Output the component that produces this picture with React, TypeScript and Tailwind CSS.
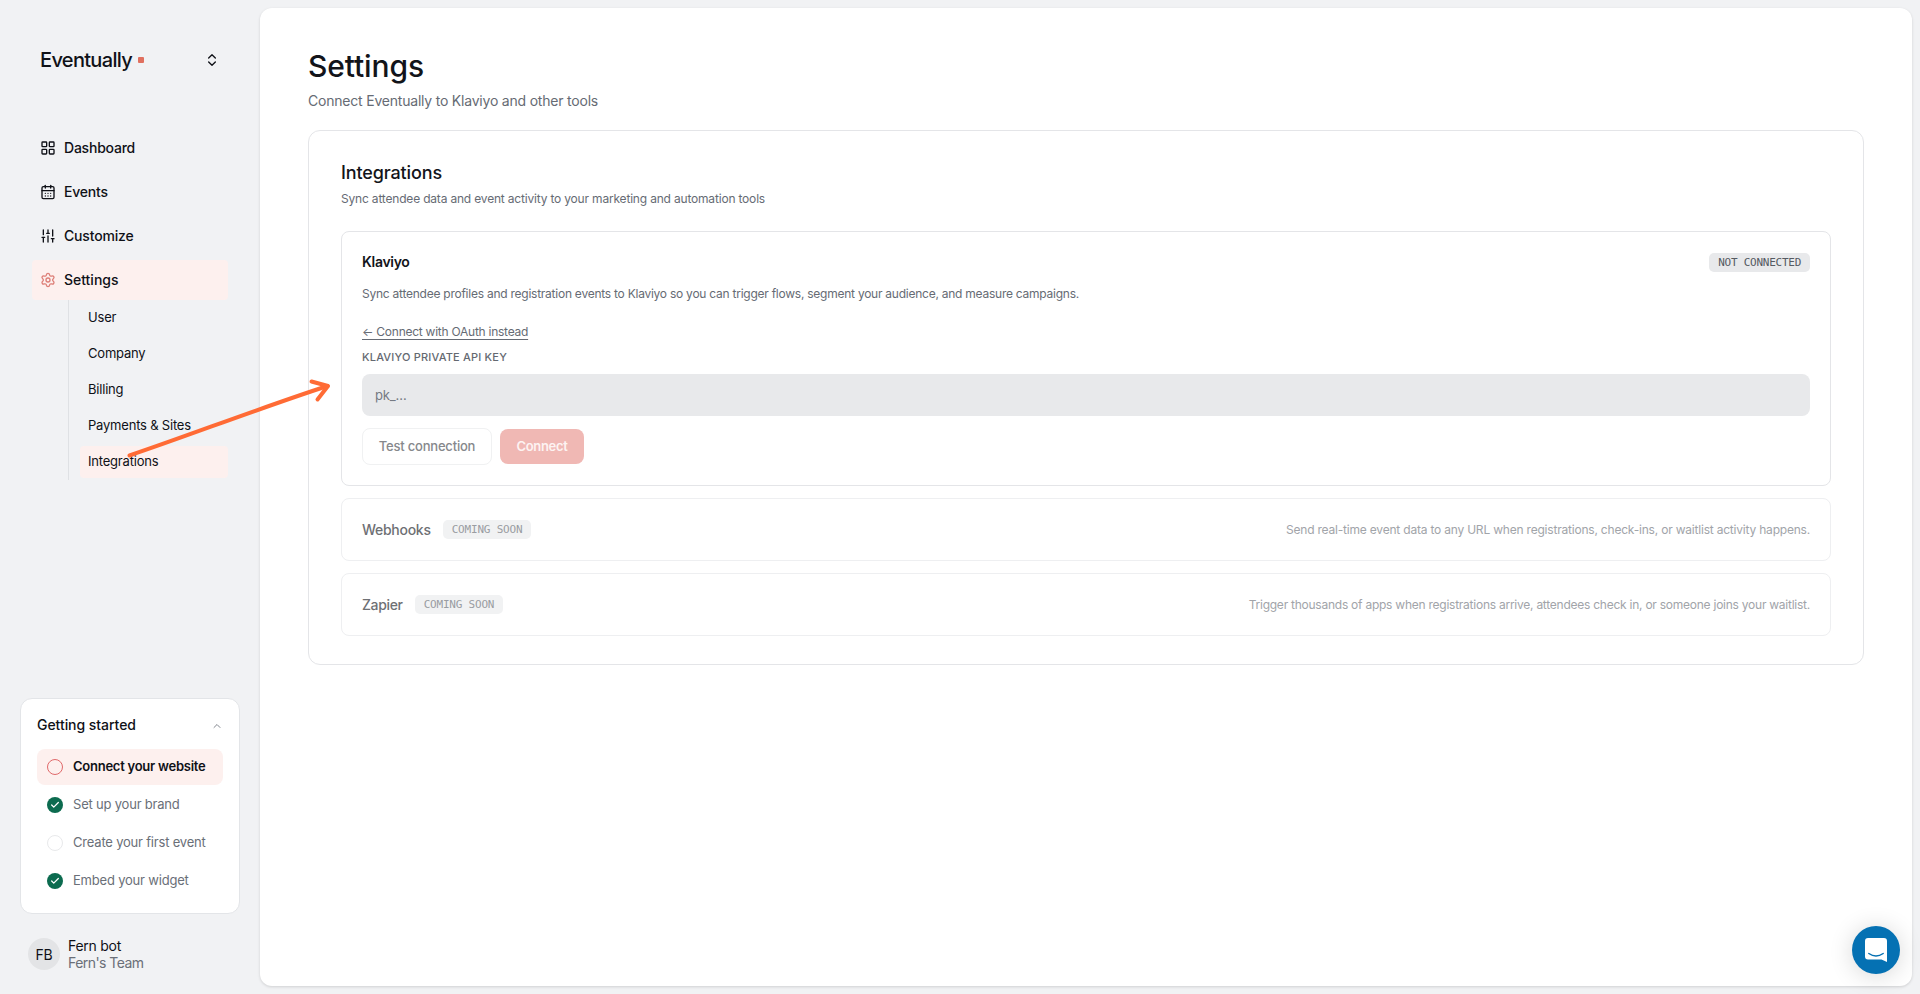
import React from 'react';
import {
  CalendarDays,
  Check,
  ChevronsUpDown,
  ChevronUp,
  LayoutGrid,
  Settings,
  SlidersVertical,
} from 'lucide-react';

const navItems = [
  { id: 'dashboard', label: 'Dashboard', icon: LayoutGrid, tracking: 'tracking-[-0.22px]' },
  { id: 'events', label: 'Events', icon: CalendarDays, tracking: 'tracking-[-0.2px]' },
  { id: 'customize', label: 'Customize', icon: SlidersVertical, tracking: 'tracking-[-0.18px]' },
  { id: 'settings', label: 'Settings', icon: Settings, tracking: 'tracking-[-0.01px]' },
];

const subItems = ['User', 'Company', 'Billing', 'Payments & Sites', 'Integrations'];

const steps = [
  { label: 'Connect your website', state: 'current' },
  { label: 'Set up your brand', state: 'done' },
  { label: 'Create your first event', state: 'todo' },
  { label: 'Embed your widget', state: 'done' },
];

const upcoming = [
  {
    name: 'Webhooks',
    tracking: 'tracking-[-0.28px]',
    description:
      'Send real-time event data to any URL when registrations, check-ins, or waitlist activity happens.',
    descTracking: 'tracking-[-0.202px]',
  },
  {
    name: 'Zapier',
    tracking: 'tracking-[-0.35px]',
    description:
      'Trigger thousands of apps when registrations arrive, attendees check in, or someone joins your waitlist.',
    descTracking: 'tracking-[-0.245px]',
  },
];

const StepIcon: React.FC<{ state: string }> = ({ state }) => {
  if (state === 'done') {
    return (
      <span className="w-4 h-4 rounded-full bg-[#0c6b4f] text-white flex items-center justify-center">
        <Check size={10} strokeWidth={3} />
      </span>
    );
  }
  return (
    <span
      className={`w-4 h-4 rounded-full border ${state === 'current' ? 'border-[#e0696a]' : 'border-[#e8e9eb]'}`}
    />
  );
};

const Sidebar: React.FC = () => (
  <aside className="w-[260px] shrink-0 flex flex-col text-[#0f1117]">
    <div className="h-10 mt-10 pl-10 pr-10 flex items-center">
      <span className="text-[20px] font-medium tracking-[-0.68px] leading-6">Eventually</span>
      <span className="w-1.5 h-1.5 ml-1.5 bg-[#e0705f] rounded-[1px]" />
      <ChevronsUpDown size={16} className="ml-auto" />
    </div>

    <nav className="mt-12 pl-8 pr-8">
      <div className="space-y-1">
        {navItems.map((item) => {
          const Icon = item.icon;
          const isActive = item.id === 'settings';
          return (
            <div
              key={item.id}
              className={`h-10 px-2 flex items-center gap-2 rounded ${isActive ? 'bg-[#fdf0ee]' : ''}`}
            >
              <Icon size={16} className={isActive ? 'text-[#dd7f78]' : ''} />
              <span className={`text-sm font-medium ${item.tracking}`}>{item.label}</span>
            </div>
          );
        })}
      </div>

      <div className="ml-9 border-l border-[#dfe1e4] pl-[11px] pt-0.5 pb-0.5 space-y-1">
        {subItems.map((label) => (
          <div
            key={label}
            className={`h-8 px-2 flex items-center rounded text-[13px] tracking-[-0.2px] ${
              label === 'Integrations' ? 'bg-[#fdf0ee]' : ''
            }`}
          >
            {label}
          </div>
        ))}
      </div>
    </nav>

    <section className="mt-auto mx-5 w-[220px] h-[216px] rounded-xl border border-[#e3e5e8] bg-white px-4 pt-4">
      <div className="h-5 flex items-center justify-between">
        <h2 className="text-sm font-medium tracking-[-0.05px]">Getting started</h2>
        <ChevronUp size={12} className="text-[#83878f] mt-0.5" />
      </div>
      <ul className="mt-[14px] space-y-0.5">
        {steps.map((step) => (
          <li
            key={step.label}
            className={`h-9 px-2.5 flex items-center gap-2.5 rounded-lg text-[13px] ${
              step.state === 'current'
                ? 'bg-[#fdf0ee] font-semibold tracking-[-0.25px]'
                : 'text-[#6a6f78] tracking-[-0.2px]'
            }`}
          >
            <StepIcon state={step.state} />
            <span>{step.label}</span>
          </li>
        ))}
      </ul>
    </section>

    <div className="my-[23px] ml-7 flex items-center gap-2 text-sm leading-[17px]">
      <div className="w-8 h-8 rounded-full bg-[#e3e4e6] flex items-center justify-center tracking-[-0.3px]">FB</div>
      <div>
        <p className="tracking-[-0.26px]">Fern bot</p>
        <p className="text-[#6a6f78] tracking-[-0.55px]">Fern's Team</p>
      </div>
    </div>
  </aside>
);

const KlaviyoCard: React.FC = () => (
  <div className="h-[255px] rounded-lg border border-[#e4e5e8] px-5 pt-5">
    <div className="flex items-end justify-between h-5">
      <h3 className="text-sm font-semibold tracking-[-0.31px]">Klaviyo</h3>
      <span className="h-[19px] px-[9px] rounded-[5px] bg-[#e8e9eb] text-[#555a62] font-['DejaVu_Sans_Mono',monospace] text-[11px] leading-[19px] tracking-[-0.25px]">
        NOT CONNECTED
      </span>
    </div>
    <p className="mt-3 text-xs leading-5 tracking-[-0.246px] text-[#666b74]">
      Sync attendee profiles and registration events to Klaviyo so you can trigger flows, segment your audience, and
      measure campaigns.
    </p>
    <div className="mt-[18px] h-5 flex items-center">
      <a className="text-xs tracking-[-0.25px] text-[#666b74] underline underline-offset-[3px]">
        ← Connect with OAuth instead
      </a>
    </div>
    <label className="block mt-[7px] h-4 text-[11px] leading-4 font-medium tracking-[0.19px] text-[#646971]">
      KLAVIYO PRIVATE API KEY
    </label>
    <input
      className="block mt-[9px] w-full h-[42px] rounded-lg bg-[#e8e9eb] px-[13px] text-[13px] tracking-[-0.2px] placeholder:text-[#757a83]"
      placeholder="pk_…"
      disabled
    />
    <div className="mt-3 flex items-center gap-2">
      <button className="h-[37px] w-[130px] rounded-lg border border-[#f0f1f2] text-[13px] font-medium tracking-[-0.2px] text-[#86888c]">
        Test connection
      </button>
      <button className="h-[35px] w-[84px] rounded-lg bg-[#f0b8b4] text-[13px] font-semibold tracking-[-0.32px] text-[#fdf3f2]">
        Connect
      </button>
    </div>
  </div>
);

// Pointer drawn over the page, from the Integrations link to the card
const GuideArrow: React.FC = () => (
  <svg
    className="absolute left-0 top-0 pointer-events-none"
    width="400"
    height="500"
    fill="none"
    stroke="#ff6b35"
    strokeWidth="4"
    strokeLinecap="round"
    strokeLinejoin="round"
  >
    <path d="M129.5 455.5C190 435 260 408 327.5 386" />
    <path d="M311.5 381.5L328 386L317.5 399.5" />
  </svg>
);

export default function App() {
  return (
    <div className="relative h-screen flex bg-[#f1f2f4] overflow-hidden font-['Inter',sans-serif]">
      <Sidebar />

      <main className="flex-1 my-2 mr-2 pl-12 pr-12 bg-white rounded-xl shadow-[0_1px_3px_rgba(0,0,0,0.14)] text-[#12141a]">
        <h1 className="mt-10 text-[30px] leading-9 font-medium tracking-[-0.12px]">Settings</h1>
        <p className="mt-[7px] text-sm leading-5 tracking-[-0.208px] text-[#666b74]">
          Connect Eventually to Klaviyo and other tools
        </p>

        <section className="mt-[19px] h-[535px] rounded-xl border border-[#e4e5e8] px-8 pt-8">
          <h2 className="text-lg leading-5 font-medium tracking-[-0.13px]">Integrations</h2>
          <p className="mt-1.5 text-xs leading-5 tracking-[-0.185px] text-[#666b74]">
            Sync attendee data and event activity to your marketing and automation tools
          </p>

          <div className="mt-[22px] space-y-3">
            <KlaviyoCard />
            {upcoming.map((item) => (
              <div
                key={item.name}
                className="h-[63px] rounded-lg border border-[#eeeff1] px-5 flex items-center justify-between"
              >
                <div className="flex items-center gap-3">
                  <h3 className={`text-sm font-medium text-[#6e7074] ${item.tracking}`}>{item.name}</h3>
                  <span className="h-[19px] px-[9px] rounded-[5px] bg-[#f1f2f3] text-[#9a9da2] font-['DejaVu_Sans_Mono',monospace] text-[11px] leading-[19px] tracking-[-0.2px]">
                    COMING SOON
                  </span>
                </div>
                <p className={`text-xs text-[#a1a4a9] ${item.descTracking}`}>{item.description}</p>
              </div>
            ))}
          </div>
        </section>
      </main>

      <GuideArrow />

      <button className="absolute right-5 bottom-5 w-12 h-12 rounded-full bg-[#0571b3] flex items-center justify-center shadow-[0_2px_24px_rgba(0,0,0,0.16)]">
        <svg width="22" height="24" viewBox="0 0 22 24">
          <path d="M3 0H19Q22 0 22 3V24L16.5 21.5H3Q0 21.5 0 18.5V3Q0 0 3 0Z" fill="#fff" />
          <path d="M3.8 15.5Q11 20.5 18.2 15.5" fill="none" stroke="#0571b3" strokeWidth="1.4" strokeLinecap="round" />
        </svg>
      </button>
    </div>
  );
}
